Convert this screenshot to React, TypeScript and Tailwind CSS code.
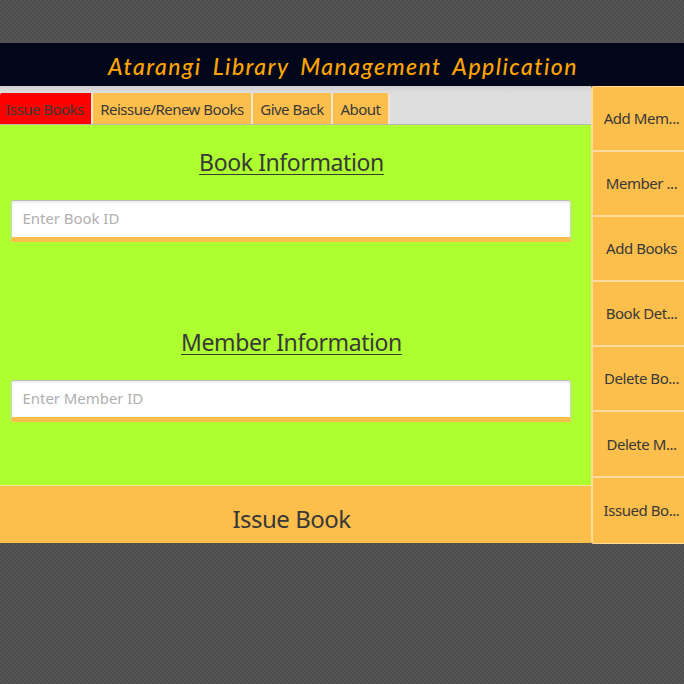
const members = [
  { label: "Add Mem...", box: "h-[64px]" },
  { label: "Member ...", box: "h-[65px]" },
  { label: "Add Books", box: "h-[65px]" },
  { label: "Book Det...", box: "h-[65px]" },
  { label: "Delete Bo...", box: "h-[65px]" },
  { label: "Delete M...", box: "h-[66px]" },
  { label: "Issued Bo...", box: "h-[68px]" },
];

const tabs = [
  { label: "Issue Books", look: "w-[93px] pr-0.5 bg-[#ff0000]" },
  { label: "Reissue/Renew Books", look: "w-[160px] bg-[#fdbf4c]" },
  { label: "Give Back", look: "w-[80px] bg-[#fdbf4c]" },
  { label: "About", look: "w-[57px] bg-[#fdbf4c]" },
];

function Heading({ children }: { children: string }) {
  return (
    <h2 className="h-9 w-[561px] text-center text-[23px] leading-[34px] tracking-[-0.4px]">
      <span className="underline decoration-1 underline-offset-3">{children}</span>
    </h2>
  );
}

function Field({ placeholder }: { placeholder: string }) {
  return (
    <input
      placeholder={placeholder}
      className="block h-[42px] w-[560px] rounded-t-[3px] border border-b-[5px] border-[#bcbcbc] border-x-[#d0d0d0] border-b-[#fdbf4c] bg-white px-[10.5px] pb-0.5 text-[15px] tracking-[-0.05px] text-[#333] shadow-[inset_0_2px_2px_#eee] outline-none placeholder:text-[#b0b0b0]"
    />
  );
}

export default function App() {
  return (
    <div className="h-[684px] w-[684px] overflow-hidden bg-[#525252] bg-[repeating-conic-gradient(#4d4d4d_0%_25%,#555555_25%_50%)] bg-[length:4px_4px] pt-[43px] font-['Noto_Sans',sans-serif] text-[#383838]">
      <header className="flex h-[43px] items-center justify-center bg-[#02061a] pt-[3px] pl-0.5 font-['Lato',sans-serif] text-[23px] font-medium italic tracking-[1.45px] whitespace-nowrap text-[#ffa500] [word-spacing:4.5px]">
        <h1>Atarangi Library Management Application</h1>
      </header>
      <div className="flex h-[457px]">
        <main className="flex w-[591px] flex-col">
          <nav className="flex h-[39px] items-end border-b border-[#b8b8b8] bg-[#ddd] bg-linear-to-b from-[#d2d2d2] to-[#dedede] to-20%">
            {tabs.map((t) => (
              <button
                key={t.label}
                className={`h-[31px] shrink-0 rounded-t-[2px] border-r-2 border-[#f5e7cf] pt-0.5 text-[15px] tracking-[-0.52px] whitespace-nowrap ${t.look}`}
              >
                {t.label}
              </button>
            ))}
          </nav>
          <section className="flex h-[360px] flex-col bg-[#adff2f] pl-[11px]">
            <div className="mt-5"><Heading>Book Information</Heading></div>
            <div className="mt-[19px]"><Field placeholder="Enter Book ID" /></div>
            <div className="mt-[83px]"><Heading>Member Information</Heading></div>
            <div className="mt-[19px]"><Field placeholder="Enter Member ID" /></div>
          </section>
          <button className="h-[58px] w-full border-t border-[#f2e59a] bg-[#fdbf4c] pt-2 pr-2 text-2xl tracking-[-0.5px]">Issue Book</button>
        </main>
        <aside className="flex h-[458px] w-[93px] flex-col overflow-hidden rounded-l-[3px] border-l-2 border-[#ffdb9a] bg-[#fdbf4c]">
          {members.map((m) => (
            <button key={m.label} className={`shrink-0 border-t-2 border-[#ffdc9d] pl-[6px] text-center text-[15px] tracking-[-0.45px] whitespace-nowrap first:border-t last:border-b ${m.box}`}>
              {m.label}
            </button>
          ))}
        </aside>
      </div>
    </div>
  );
}
